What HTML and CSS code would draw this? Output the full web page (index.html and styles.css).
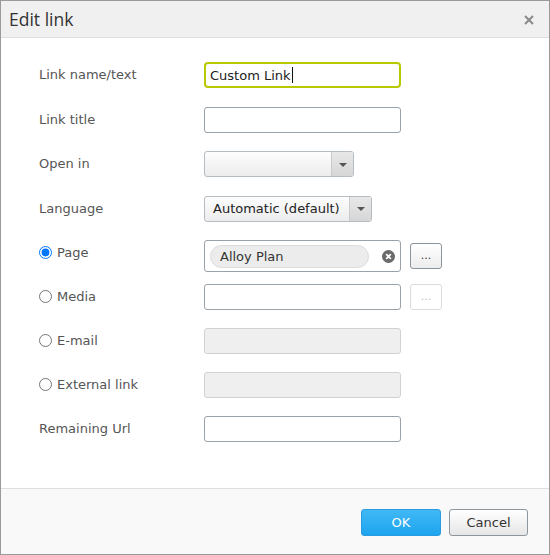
FILE: index.html
```html
<!DOCTYPE html>
<html>
<head>
<meta charset="utf-8">
<link rel="stylesheet" href="styles.css">
</head>
<body>
<div class="dialog">
  <div class="header">
    <span class="title">Edit link</span>
    <svg class="close" width="10" height="10" viewBox="0 0 10 10"><path d="M1 1L9 9M9 1L1 9" stroke="#8a8a8a" stroke-width="2" stroke-linecap="butt"/></svg>
  </div>
  <div class="body">
    <div class="row half">
      <label class="lbl">Link name/text</label>
      <div class="field focused">Custom Link<span class="caret"></span></div>
    </div>
    <div class="row half">
      <label class="lbl">Link title</label>
      <input class="field" type="text">
    </div>
    <div class="row half">
      <label class="lbl">Open in</label>
      <div class="select open-in"><span class="sel-text"></span><span class="sel-arrow"><i></i></span></div>
    </div>
    <div class="row half">
      <label class="lbl">Language</label>
      <div class="select lang"><span class="sel-text">Automatic (default)</span><span class="sel-arrow"><i></i></span></div>
    </div>
    <div class="row">
      <label class="lbl"><input type="radio" name="t" class="radio" checked>Page</label>
      <div class="page-field">
        <span class="pill">Alloy Plan</span>
        <svg class="clear" width="13" height="13" viewBox="0 0 13 13"><circle cx="6.5" cy="6.5" r="6.5" fill="#6b6b6b"/><path d="M4.2 4.2L8.8 8.8M8.8 4.2L4.2 8.8" stroke="#fff" stroke-width="1.8"/></svg>
      </div>
      <button class="browse">...</button>
    </div>
    <div class="row">
      <label class="lbl"><input type="radio" name="t" class="radio">Media</label>
      <input class="field" type="text">
      <button class="browse disabled">...</button>
    </div>
    <div class="row">
      <label class="lbl"><input type="radio" name="t" class="radio">E-mail</label>
      <input class="field disabled-field" type="text" disabled>
    </div>
    <div class="row">
      <label class="lbl"><input type="radio" name="t" class="radio">External link</label>
      <input class="field disabled-field" type="text" disabled>
    </div>
    <div class="row">
      <label class="lbl">Remaining Url</label>
      <input class="field" type="text">
    </div>
  </div>
  <div class="footer">
    <button class="btn ok">OK</button>
    <button class="btn cancel">Cancel</button>
  </div>
</div>
</body>
</html>
```
FILE: styles.css
```css
* { box-sizing: border-box; }
html, body { margin: 0; padding: 0; background: #fff; }
body { font-family: "DejaVu Sans", Verdana, sans-serif; font-size: 13px; }

.dialog {
  width: 550px;
  height: 555px;
  border: 1px solid #9a9a9a;
  display: flex;
  flex-direction: column;
  background: #fff;
}

.header {
  height: 37px;
  background: #f0f0f0;
  border-bottom: 1px solid #dedede;
  display: flex;
  align-items: center;
  justify-content: space-between;
  padding: 0 15px 0 8px;
  flex: none;
}
.title {
  font-family: "Open Sans", sans-serif;
  font-size: 17.5px;
  color: #333;
  line-height: 1;
  margin-top: 1px;
}
.close { display: block; margin-top: 2px; }

.body {
  flex: 1;
  padding: 24px 0 0 38px;
  display: flex;
  flex-direction: column;
  gap: 18px;
}
.row {
  display: flex;
  align-items: center;
  height: 26px;
}
.row.half { margin-bottom: 0.5px; }

.lbl {
  width: 165px;
  color: #555;
  display: flex;
  align-items: center;
  flex: none;
  margin-top: -1px;
}
.radio {
  margin: 0 5px 0 0;
  width: 13px;
  height: 13px;
}

.field {
  width: 197px;
  height: 26px;
  border: 1px solid #9aa2aa;
  border-radius: 3px;
  background: #fff;
  font: inherit;
  color: #222;
  padding: 0 5px;
  outline: none;
}
.field.focused {
  border: 2px solid #b8c900;
  border-radius: 4px;
  display: flex;
  align-items: center;
  padding: 0 4px;
}
.caret {
  display: inline-block;
  width: 1px;
  height: 16px;
  background: #111;
  margin-left: 1px;
}
.disabled-field {
  background: #efefef;
  border-color: #d2d2d2;
}

.select {
  height: 26px;
  border: 1px solid #b5bcc2;
  border-radius: 3px;
  background: linear-gradient(#fdfdfd, #ececec);
  display: flex;
  color: #222;
}
.open-in { width: 150px; }
.lang { width: 168px; }
.sel-text {
  flex: 1;
  padding-left: 8px;
  display: flex;
  align-items: center;
}
.sel-arrow {
  width: 22px;
  border-left: 1px solid #cacaca;
  background: linear-gradient(#e8e8e8, #d6d6d6);
  display: flex;
  align-items: center;
  justify-content: center;
  border-radius: 0 2px 2px 0;
}
.sel-arrow i {
  width: 0;
  height: 0;
  border-left: 4px solid transparent;
  border-right: 4px solid transparent;
  border-top: 4px solid #555;
  margin-top: 1px;
}

.page-field {
  width: 197px;
  height: 32px;
  margin-top: 6px;
  border: 1px solid #9aa2aa;
  border-radius: 3px;
  display: flex;
  align-items: center;
  padding: 0 0 0 5px;
  gap: 13px;
}
.pill {
  width: 159px;
  height: 23px;
  border: 1px solid #dcdcdc;
  background: #ececec;
  border-radius: 12px;
  padding-left: 9px;
  display: flex;
  align-items: center;
  color: #333;
}
.clear { display: block; }

.browse {
  width: 32px;
  height: 26px;
  margin-left: 9px;
  border: 1px solid #8c959c;
  border-radius: 3px;
  background: linear-gradient(#ffffff, #ececec);
  font: inherit;
  font-size: 11px;
  color: #333;
  padding: 0 0 2px;
  line-height: 1;
}
.row .page-field + .browse { margin-top: 6px; }
.browse.disabled {
  border-color: #dcdcdc;
  color: #bbb;
  background: #fff;
}

.footer {
  height: 66px;
  border-top: 1px solid #dedede;
  background: #f9f9f9;
  flex: none;
  display: flex;
  justify-content: flex-end;
  align-items: flex-start;
  padding: 20px 21px 0 0;
  gap: 8px;
}
.btn {
  height: 27px;
  border-radius: 3px;
  font: inherit;
  padding: 0 0 1px;
}
.ok {
  width: 80px;
  border: 1px solid #2b9be0;
  background: linear-gradient(#40b8f5, #1ea4ef);
  color: #fff;
}
.cancel {
  width: 79px;
  border: 1px solid #8f979e;
  background: linear-gradient(#ffffff, #e6e6e6);
  color: #333;
}
```
